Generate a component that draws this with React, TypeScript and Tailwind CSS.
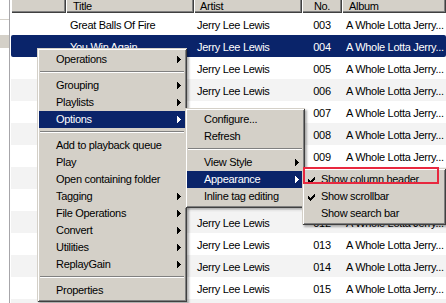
import React from 'react'

type Item = { label?: string; sub?: boolean; sep?: boolean; active?: boolean; checked?: boolean }

const mainItems: Item[] = [
  { label: 'Operations', sub: true },
  { sep: true },
  { label: 'Grouping', sub: true },
  { label: 'Playlists', sub: true },
  { label: 'Options', sub: true, active: true },
  { sep: true },
  { label: 'Add to playback queue' },
  { label: 'Play' },
  { label: 'Open containing folder' },
  { label: 'Tagging', sub: true },
  { label: 'File Operations', sub: true },
  { label: 'Convert', sub: true },
  { label: 'Utilities', sub: true },
  { label: 'ReplayGain', sub: true },
  { sep: true },
  { label: 'Properties' },
]

const optionItems: Item[] = [
  { label: 'Configure...' },
  { label: 'Refresh' },
  { sep: true },
  { label: 'View Style', sub: true },
  { label: 'Appearance', sub: true, active: true },
  { label: 'Inline tag editing' },
]

const appearanceItems: Item[] = [
  { label: 'Show column header', checked: true },
  { label: 'Show scrollbar', checked: true },
  { label: 'Show search bar' },
]

const tracks = [
  ['003', 'Great Balls Of Fire'],
  ['004', 'You Win Again'],
  ['005', 'Crazy Arms'],
  ['006', 'Breathless'],
  ['007', 'Down The Line'],
  ['008', 'Lewis Boogie'],
  ['009', 'Fools Like Me'],
  ['010', 'End Of The Road'],
  ['011', 'Mean Woman Blues'],
  ['012', 'Break Up'],
  ['013', 'It\'ll Be Me'],
  ['014', 'Wild One'],
  ['015', 'Lovin\' Up A Storm'],
  ['016', 'Milkshake Mademoiselle'],
]

// classic submenu arrow, drawn pixel by pixel
const Arrow = ({ white }: { white?: boolean }) => (
  <svg width="4" height="7" viewBox="0 0 4 7" shapeRendering="crispEdges" className={white ? 'fill-white' : 'fill-black'}>
    <rect x="0" y="0" width="1" height="7" />
    <rect x="1" y="1" width="1" height="5" />
    <rect x="2" y="2" width="1" height="3" />
    <rect x="3" y="3" width="1" height="1" />
  </svg>
)

const Check = () => (
  <svg width="7" height="7" viewBox="0 0 7 7" shapeRendering="crispEdges" className="fill-black">
    <rect x="0" y="2" width="1" height="3" />
    <rect x="1" y="3" width="1" height="3" />
    <rect x="2" y="4" width="1" height="3" />
    <rect x="3" y="3" width="1" height="3" />
    <rect x="4" y="2" width="1" height="3" />
    <rect x="5" y="1" width="1" height="3" />
    <rect x="6" y="0" width="1" height="3" />
  </svg>
)

const Menu = ({ items, className }: { items: Item[]; className: string }) => (
  <div
    className={`absolute bg-[#d4d0c8] px-[2px] pt-[3px] pb-[3px] shadow-[inset_1px_1px_0_#d4d0c8,inset_-1px_-1px_0_#404040,inset_2px_2px_0_#ffffff,inset_-2px_-2px_0_#808080,2px_2px_2px_rgba(0,0,0,0.3)] ${className}`}
  >
    {items.map((it, i) =>
      it.sep ? (
        <div key={i} className="h-[9px] pt-[3px] px-px">
          <div className="border-t border-b border-t-[#808080] border-b-white" />
        </div>
      ) : (
        <div
          key={i}
          className={`relative flex items-center h-[17px] pl-[17px] leading-[17px] whitespace-nowrap ${it.active ? 'bg-[#0a246a] text-white' : 'text-black'}`}
        >
          {it.checked && (
            <span className="absolute left-[4px] top-[6px] flex">
              <Check />
            </span>
          )}
          <span>{it.label}</span>
          {it.sub && (
            <span className="ml-auto mr-[4px] flex">
              <Arrow white={it.active} />
            </span>
          )}
        </div>
      )
    )}
  </div>
)

const headCell = 'bg-[#d4d0c8] leading-[13px] whitespace-nowrap overflow-hidden shadow-[inset_1px_0_0_#ffffff,inset_-1px_-1px_0_#404040,inset_-2px_-2px_0_#808080]'

export default function App() {
  return (
    <div className="relative w-[446px] h-[303px] overflow-hidden bg-white text-[11px] tracking-[-0.3px] font-['Liberation_Sans',Arial,sans-serif] text-black">
      <div className="flex h-full">
        {/* left pane */}
        <div className="w-[10px] shrink-0 border-r border-[#a7a6aa] flex flex-col">
          <div className="h-[19px]" />
          <div className="h-px bg-[#d4d0c8]" />
          <div className="h-[15px]" />
          <div className="h-[13px] bg-[#d4d0c8]" />
        </div>

        {/* track list */}
        <div className="flex-1 flex flex-col pl-px min-w-0">
          <div className="flex h-[13px] shrink-0">
            <div className={`w-[55px] ${headCell}`} />
            <div className={`w-[128px] pl-[7px] ${headCell}`}>Title</div>
            <div className={`w-[108px] pl-[6px] ${headCell}`}>Artist</div>
            <div className={`w-[40px] text-center ${headCell}`}>No.</div>
            <div className={`flex-1 pl-[7px] ${headCell}`}>Album</div>
          </div>
          {tracks.map(([no, title], i) => {
            const selected = no === '004'
            const bg = selected ? 'bg-[#0a246a] text-white rounded-[2px]' : i % 2 === 1 ? 'bg-[#f3f3f3]' : 'bg-white'
            return (
              <div key={no} className={`flex h-[22px] shrink-0 pt-[2px] leading-[20px] whitespace-nowrap ${bg}`}>
                <div className="w-[55px]" />
                <div className="w-[128px] pl-[4px] overflow-hidden">{title}</div>
                <div className="w-[108px] pl-[3px] overflow-hidden">Jerry Lee Lewis</div>
                <div className="w-[40px] text-center">{no}</div>
                <div className="flex-1 pl-[4px] overflow-hidden">A Whole Lotta Jerry...</div>
              </div>
            )
          })}
        </div>
      </div>

      <Menu items={mainItems} className="left-[37px] top-[48px] w-[150px]" />
      <Menu items={optionItems} className="left-[185px] top-[108px] w-[120px]" />
      <Menu items={appearanceItems} className="left-[302px] top-[168px] w-[144px]" />

      {/* red annotation box */}
      <div className="absolute left-[303px] top-[167px] w-[136px] h-[17px] border-2 border-[#e8283f]" />
    </div>
  )
}
